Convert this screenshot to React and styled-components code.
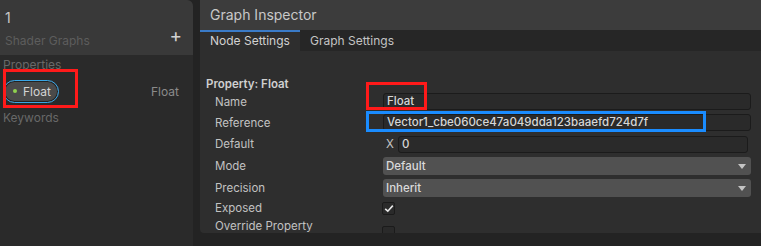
import React from 'react'
import styled, { createGlobalStyle } from 'styled-components'

const Global = createGlobalStyle`
  body {
    margin: 0;
    background: #232323;
    font-family: Inter, "Noto Sans", sans-serif;
  }
`

const rows = [
  { label: 'Name', kind: 'text', value: 'Float' },
  { label: 'Reference', kind: 'text', value: 'Vector1_cbe060ce47a049dda123baaefd724d7f' },
  { label: 'Default', kind: 'vec', value: '0' },
  { label: 'Mode', kind: 'select', value: 'Default' },
  { label: 'Precision', kind: 'select', value: 'Inherit' },
  { label: 'Exposed', kind: 'check', value: true },
  { label: 'Override Property', kind: 'check', value: false, tall: true },
]

const App = () => {
  return (
    <Screen>
      <Global />
      <Blackboard>
        <BoardHeader>
          <BoardTitle>1</BoardTitle>
          <BoardSub>Shader Graphs</BoardSub>
          <AddButton>+</AddButton>
        </BoardHeader>
        <BoardBody>
          <Section>Properties</Section>
          <PropRow>
            <Pill>
              <Dot />
              Float
            </Pill>
            <PropType>Float</PropType>
            <Mark $color="#ff1a1a" style={{ left: 0, top: -10, width: 75, height: 39 }} />
          </PropRow>
          <Section>Keywords</Section>
        </BoardBody>
      </Blackboard>

      <Inspector>
        <InspectorHeader>Graph Inspector</InspectorHeader>
        <Tabs>
          <Tab $active>Node Settings</Tab>
          <Tab>Graph Settings</Tab>
        </Tabs>
        <Content>
          <PropTitle>Property: Float</PropTitle>
          <Fields>
            {rows.map((r) => (
              <Row key={r.label} $tall={r.tall}>
                <Label>{r.label}</Label>
                {r.kind === 'text' && <TextField>{r.value}</TextField>}
                {r.kind === 'vec' && (
                  <VecWrap>
                    <Axis>X</Axis>
                    <TextField $inset>{r.value}</TextField>
                  </VecWrap>
                )}
                {r.kind === 'select' && (
                  <Select>
                    {r.value}
                    <Arrow />
                  </Select>
                )}
                {r.kind === 'check' && (
                  <Check $low={r.tall}>
                    {r.value && (
                      <svg width="10" height="9" viewBox="0 0 10 9">
                        <path d="M1.2 4.8 L3.8 7.2 L8.8 1.6" stroke="#e6e6e6" strokeWidth="1.6" fill="none" />
                      </svg>
                    )}
                  </Check>
                )}
              </Row>
            ))}
          </Fields>
          <Mark $color="#ff1a1a" style={{ left: 166, top: 31, width: 61, height: 28 }} />
          <Mark $color="#1a8cff" style={{ left: 166, top: 60, width: 340, height: 21 }} />
        </Content>
      </Inspector>
    </Screen>
  )
}

const Screen = styled.div`
  display: flex;
  width: 761px;
  height: 246px;
  overflow: hidden;
  background: #232323;
`
const Blackboard = styled.div`
  width: 193px;
  height: 246px;
  background: #2a2a2a;
  border-top-right-radius: 6px;
  display: flex;
  flex-direction: column;
  flex-shrink: 0;
`
const BoardHeader = styled.div`
  position: relative;
  height: 55px;
  background: #393939;
  border-top-right-radius: 6px;
  padding: 9px 0 0 5px;
  box-sizing: border-box;
`
const BoardTitle = styled.div`
  font-size: 14px;
  color: #c8c8c8;
  line-height: 18px;
`
const BoardSub = styled.div`
  margin-top: 6px;
  font-size: 12px;
  color: #5d5d5d;
  line-height: 16px;
`
const AddButton = styled.div`
  position: absolute;
  right: 11px;
  top: 26px;
  font-size: 19px;
  line-height: 19px;
  color: #d2d2d2;
`
const BoardBody = styled.div`
  padding: 2px 0 0 2px;
  display: flex;
  flex-direction: column;
`
const Section = styled.div`
  font-size: 12px;
  color: #686868;
  line-height: 16px;
  padding-left: 1px;
`
const PropRow = styled.div`
  position: relative;
  display: flex;
  align-items: center;
  justify-content: space-between;
  height: 24px;
  margin: 6px 0 7px 1px;
  padding-right: 14px;
`
const Pill = styled.div`
  display: flex;
  align-items: center;
  gap: 6px;
  height: 23px;
  width: 56px;
  box-sizing: border-box;
  padding-left: 9px;
  border-radius: 12px;
  background: #4a4a4a;
  border: 1px solid #3aa6e6;
  box-shadow: inset 0 0 0 1px #222;
  font-size: 12px;
  color: #d4d4d4;
`
const Dot = styled.span`
  width: 4px;
  height: 4px;
  border-radius: 50%;
  background: #8fd14f;
`
const PropType = styled.div`
  font-size: 12px;
  color: #8a8a8a;
`
const Mark = styled.div`
  position: absolute;
  border: 3px solid ${(p) => p.$color};
  box-sizing: border-box;
  pointer-events: none;
`
const Inspector = styled.div`
  flex: 1;
  margin-left: 7px;
  height: 233px;
  display: flex;
  flex-direction: column;
  background: #2e2e2e;
  border-bottom-left-radius: 4px;
  overflow: hidden;
`
const InspectorHeader = styled.div`
  height: 32px;
  background: #3c3c3c;
  color: #c8c8c8;
  font-size: 14px;
  line-height: 30px;
  padding-left: 10px;
`
const Tabs = styled.div`
  display: flex;
  height: 21px;
  background: #262626;
`
const Tab = styled.div`
  box-sizing: border-box;
  width: ${(p) => (p.$active ? '100px' : 'auto')};
  height: 21px;
  padding: 0 10px;
  font-size: 12px;
  line-height: 18px;
  color: ${(p) => (p.$active ? '#d2d2d2' : '#c4c4c4')};
  background: ${(p) => (p.$active ? '#2e2e2e' : 'transparent')};
  border-top: 2px solid ${(p) => (p.$active ? '#3a7bc8' : 'transparent')};
`
const Content = styled.div`
  position: relative;
  flex: 1;
  padding: 26px 10px 0 6px;
`
const PropTitle = styled.div`
  font-size: 11.5px;
  font-weight: 600;
  color: #d0d0d0;
  line-height: 15px;
`
const Fields = styled.div`
  display: flex;
  flex-direction: column;
  gap: 4.4px;
  margin-top: 1px;
  padding-left: 9px;
`
const Row = styled.div`
  display: grid;
  grid-template-columns: 168px 1fr;
  align-items: ${(p) => (p.$tall ? 'start' : 'center')};
  height: 17px;
  margin-top: ${(p) => (p.$tall ? '-3px' : '0')};
`
const Label = styled.div`
  font-size: 11.5px;
  color: #c2c2c2;
  white-space: nowrap;
  line-height: 16px;
`
const TextField = styled.div`
  height: 17px;
  box-sizing: border-box;
  background: #2a2a2a;
  border: 1px solid #1b1b1b;
  border-radius: 3px;
  padding-left: 3px;
  font-size: 11.5px;
  font-weight: 500;
  line-height: 15px;
  color: #d6d6d6;
  margin-right: ${(p) => (p.$inset ? '3px' : '0')};
  flex: 1;
`
const VecWrap = styled.div`
  display: flex;
  align-items: center;
  gap: 4px;
`
const Axis = styled.span`
  font-size: 11.5px;
  color: #c4c4c4;
  padding-left: 3px;
  width: 8px;
`
const Select = styled.div`
  position: relative;
  height: 18px;
  box-sizing: border-box;
  background: #515151;
  border-radius: 3px;
  padding-left: 3px;
  font-size: 11.5px;
  font-weight: 500;
  line-height: 18px;
  color: #dadada;
`
const Arrow = styled.span`
  position: absolute;
  right: 5px;
  top: 7px;
  border-left: 4px solid transparent;
  border-right: 4px solid transparent;
  border-top: 5px solid #c4c4c4;
`
const Check = styled.div`
  width: 13px;
  height: 13px;
  box-sizing: border-box;
  background: #2a2a2a;
  border: 1px solid #1b1b1b;
  border-radius: 2px;
  display: flex;
  align-items: center;
  justify-content: center;
  margin-left: -1px;
  margin-top: ${(p) => (p.$low ? '8px' : '0')};
`

export default App
